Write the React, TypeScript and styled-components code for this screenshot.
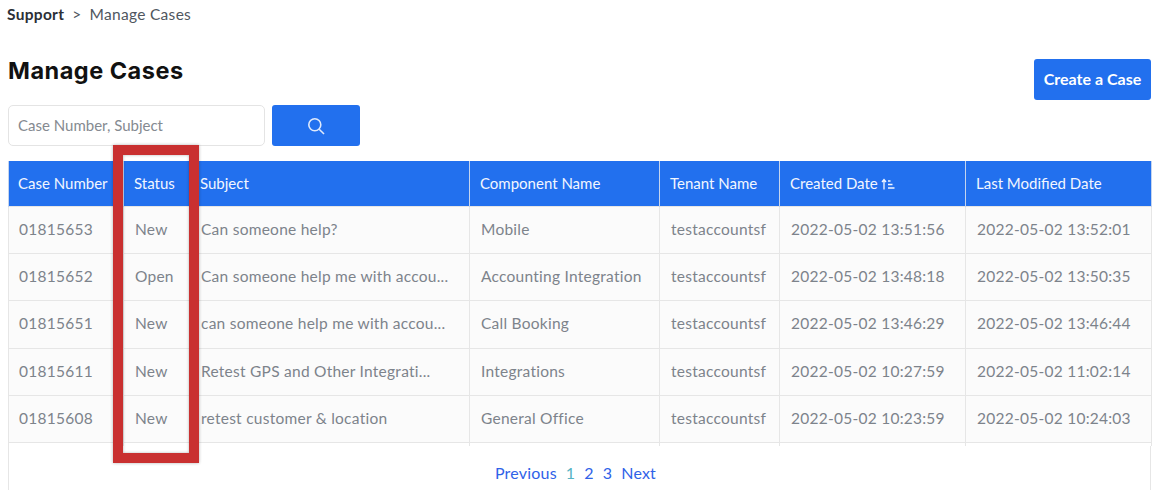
import React from "react";
import styled, { createGlobalStyle } from "styled-components";

const Global = createGlobalStyle`
  html, body { margin: 0; padding: 0; background: #fff; }
  body { font-family: "Lato", "Noto Sans", sans-serif; width: 1167px; height: 494px; overflow: hidden; }
`;

const Page = styled.div`
  position: relative;
  width: 1167px;
  height: 494px;
  overflow: hidden;
  padding: 0 16px 0 8px;
  box-sizing: border-box;
`;

const Breadcrumb = styled.nav`
  display: flex;
  align-items: center;
  height: 28px;
  margin-left: -1px;
  font-size: 15.5px;
  color: #4f5660;
  letter-spacing: 0.3px;
`;

const Crumb = styled.span`
  color: #2b2f36;
  font-weight: 700;
`;

const Separator = styled.span`
  margin: 0 8px 0 8px;
`;

const TitleRow = styled.div`
  display: flex;
  justify-content: space-between;
  align-items: flex-start;
  height: 77px;
  padding-top: 31px;
  box-sizing: border-box;
`;

const Title = styled.h1`
  margin: 0;
  font-family: "Inter", "Lato", sans-serif;
  font-size: 23.5px;
  line-height: 24px;
  font-weight: 700;
  letter-spacing: 0.5px;
  color: #111;
`;

const CreateButton = styled.button`
  width: 117px;
  height: 41px;
  border: none;
  border-radius: 3px;
  background: #2270ee;
  color: #fff;
  font-family: inherit;
  font-size: 16px;
  font-weight: 700;
  padding: 0 0 2px;
`;

const SearchRow = styled.div`
  display: flex;
  gap: 7px;
  height: 41px;
  margin-bottom: 15px;
`;

const SearchInput = styled.div`
  width: 257px;
  box-sizing: border-box;
  border: 1px solid #e4e4e4;
  border-radius: 5px;
  display: flex;
  align-items: center;
  padding: 0 0 2px 9px;
  font-size: 15px;
  color: #858a91;
`;

const SearchButton = styled.button`
  width: 88px;
  border: none;
  border-radius: 3px;
  background: #2270ee;
  display: flex;
  align-items: center;
  justify-content: center;
  padding: 0;
`;

const Card = styled.div`
  width: 1143px;
  height: 329px;
  box-sizing: border-box;
  border-left: 1px solid #e6e6e6;
  border-right: 1px solid #e6e6e6;
`;

const Table = styled.table`
  border-collapse: collapse;
  table-layout: fixed;
  width: 1142px;
  margin-left: -1px;
`;

const HeadCell = styled.th`
  height: 45px;
  padding: 0 0 1px 10px;
  box-sizing: border-box;
  background: #2270ee;
  color: #f2f6ff;
  font-size: 15px;
  font-weight: 400;
  text-align: left;
  white-space: nowrap;
  border-left: 1px solid #c4d4ee;
  border-right: 1px solid #c4d4ee;

  &:first-child {
    padding-left: 9px;
  }
`;

const Row = styled.tr`
  background: #fbfbfb;
`;

const Cell = styled.td`
  height: 47.4px;
  padding: 0 0 2px 11px;
  box-sizing: border-box;
  border: 1px solid #e6e6e6;
  color: #7d838b;
  font-size: 15.5px;
  letter-spacing: 0.25px;
  white-space: nowrap;
  overflow: hidden;

  &:first-child {
    padding-left: 10px;
  }
`;

const StubCell = styled.td`
  height: 3px;
  padding: 0;
  border: 1px solid #e6e6e6;
  border-bottom: none;
  background: #fff;
`;

const Pager = styled.div`
  display: flex;
  justify-content: center;
  gap: 9px;
  margin-top: 17px;
  padding-right: 8px;
  font-size: 16px;
  letter-spacing: 0.2px;
`;

const PageLink = styled.span<{ $current?: boolean }>`
  color: ${(p) => (p.$current ? "#55b3c4" : "#2f62e8")};
`;

const Highlight = styled.div`
  position: absolute;
  left: 113px;
  top: 145px;
  width: 86px;
  height: 318px;
  box-sizing: border-box;
  border: 10px solid #c93030;
  box-shadow: 0 0 3px rgba(0, 0, 0, 0.3), inset 0 0 3px rgba(0, 0, 0, 0.3);
  pointer-events: none;
`;

const SortGlyph = styled.svg`
  margin-left: 3px;
  vertical-align: -1px;
`;

const columns = [
  { label: "Case Number", width: 115 },
  { label: "Status", width: 66 },
  { label: "Subject", width: 280 },
  { label: "Component Name", width: 190 },
  { label: "Tenant Name", width: 120 },
  { label: "Created Date", width: 186, sorted: true },
  { label: "Last Modified Date", width: 186 },
];

const rows = [
  ["01815653", "New", "Can someone help?", "Mobile", "testaccountsf", "2022-05-02 13:51:56", "2022-05-02 13:52:01"],
  ["01815652", "Open", "Can someone help me with accou...", "Accounting Integration", "testaccountsf", "2022-05-02 13:48:18", "2022-05-02 13:50:35"],
  ["01815651", "New", "can someone help me with accou...", "Call Booking", "testaccountsf", "2022-05-02 13:46:29", "2022-05-02 13:46:44"],
  ["01815611", "New", "Retest GPS and Other Integrati...", "Integrations", "testaccountsf", "2022-05-02 10:27:59", "2022-05-02 11:02:14"],
  ["01815608", "New", "retest customer & location", "General Office", "testaccountsf", "2022-05-02 10:23:59", "2022-05-02 10:24:03"],
];

const SortIcon = () => (
  <SortGlyph width="14" height="12" viewBox="0 0 14 12" fill="none" stroke="#f2f6ff" strokeWidth="1.3">
    <path d="M3 11.5V1.5M1 4l2-2.5L5 4" />
    <path d="M7 3h2.5M7 6.5h4.5M7 10h6.5" />
  </SortGlyph>
);

export default function App() {
  return (
    <Page>
      <Global />
      <Breadcrumb>
        <Crumb>Support</Crumb>
        <Separator>&gt;</Separator>
        Manage Cases
      </Breadcrumb>
      <TitleRow>
        <Title>Manage Cases</Title>
        <CreateButton>Create a Case</CreateButton>
      </TitleRow>
      <SearchRow>
        <SearchInput>Case Number, Subject</SearchInput>
        <SearchButton>
          <svg width="18" height="18" viewBox="0 0 18 18" fill="none" stroke="#dfe9fb" strokeWidth="1.6">
            <circle cx="7.8" cy="7.8" r="6" />
            <path d="M12.2 12.2L17 17" />
          </svg>
        </SearchButton>
      </SearchRow>
      <Card>
        <Table>
          <colgroup>
            {columns.map((c) => (
              <col key={c.label} style={{ width: c.width }} />
            ))}
          </colgroup>
          <thead>
            <tr>
              {columns.map((c) => (
                <HeadCell key={c.label}>
                  {c.label}
                  {c.sorted && <SortIcon />}
                </HeadCell>
              ))}
            </tr>
          </thead>
          <tbody>
            {rows.map((r) => (
              <Row key={r[0]}>
                {r.map((v, i) => (
                  <Cell key={i}>{v}</Cell>
                ))}
              </Row>
            ))}
            <tr>
              {columns.map((c) => (
                <StubCell key={c.label} />
              ))}
            </tr>
          </tbody>
        </Table>
        <Pager>
          <PageLink>Previous</PageLink>
          <PageLink $current>1</PageLink>
          <PageLink>2</PageLink>
          <PageLink>3</PageLink>
          <PageLink>Next</PageLink>
        </Pager>
      </Card>
      <Highlight />
    </Page>
  );
}
